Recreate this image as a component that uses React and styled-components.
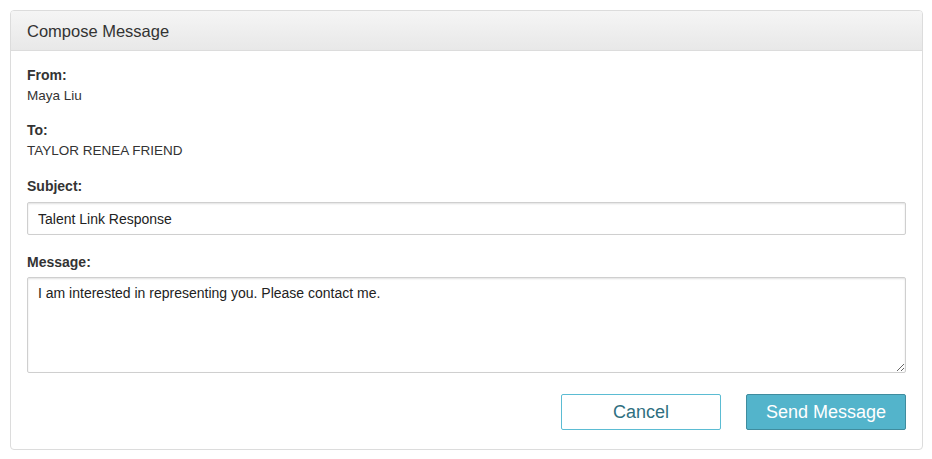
import React, { useState } from 'react';
import styled, { createGlobalStyle } from 'styled-components';

const Global = createGlobalStyle`
    body {
        margin: 0;
        background: #fff;
        font-family: "Liberation Sans", Arial, sans-serif;
        color: #333;
    }
`;

const Page = styled.div`
    padding: 10px 9px 10px 10px;
`;

const Panel = styled.div`
    border: 1px solid #dcdcdc;
    border-radius: 4px;
    background: #fff;
    overflow: hidden;
`;

const Header = styled.div`
    display: flex;
    align-items: center;
    padding: 1px 16px 0;
    box-sizing: border-box;
    height: 40px;
    background: linear-gradient(#f5f5f5, #e8e8e8);
    border-bottom: 1px solid #dcdcdc;
    font-size: 16.5px;
    color: #333;
`;

const Body = styled.div`
    padding: 15px 16px 19px;
`;

const Group = styled.div`
    margin-bottom: ${props => props.gap ?? 16}px;
`;

const Label = styled.div`
    font-size: 14px;
    font-weight: bold;
    line-height: 18px;
    color: #333;
    margin-bottom: ${props => props.gap || 3}px;
`;

const Value = styled.div`
    font-size: 13.5px;
    line-height: 18px;
    color: #333;
`;

const Input = styled.input`
    display: block;
    box-sizing: border-box;
    width: 100%;
    height: 33px;
    padding: 0 10px;
    border: 1px solid #cfcfcf;
    border-radius: 2px;
    box-shadow: inset 0 1px 2px rgba(0, 0, 0, 0.12);
    font-family: inherit;
    font-size: 14px;
    color: #222;
    outline: none;
`;

const TextArea = styled.textarea`
    display: block;
    box-sizing: border-box;
    width: 100%;
    height: 96px;
    padding: 6px 10px;
    border: 1px solid #cfcfcf;
    border-radius: 2px;
    box-shadow: inset 0 1px 2px rgba(0, 0, 0, 0.12);
    font-family: inherit;
    font-size: 14px;
    line-height: 18px;
    color: #222;
    outline: none;
    resize: vertical;
`;

const Actions = styled.div`
    display: flex;
    justify-content: flex-end;
    gap: 25px;
    margin-top: 21px;
`;

const Button = styled.button`
    width: 160px;
    height: 36px;
    border-radius: 2px;
    font-family: inherit;
    font-size: 18px;
    cursor: pointer;
    border: 1px solid ${props => props.primary ? '#3f8c9e' : '#5bbcd3'};
    background: ${props => props.primary ? '#53b4cb' : '#fff'};
    color: ${props => props.primary ? '#fff' : '#2f6f7f'};
`;

const App = () => {
    const [subject, setSubject] = useState('Talent Link Response');
    const [message, setMessage] = useState('I am interested in representing you. Please contact me.');

    return (
        <Page>
            <Global />
            <Panel>
                <Header>Compose Message</Header>
                <Body>
                    <Group>
                        <Label>From:</Label>
                        <Value>Maya Liu</Value>
                    </Group>
                    <Group gap={17}>
                        <Label>To:</Label>
                        <Value>TAYLOR RENEA FRIEND</Value>
                    </Group>
                    <Group gap={18}>
                        <Label gap={7}>Subject:</Label>
                        <Input value={subject} onChange={e => setSubject(e.target.value)} />
                    </Group>
                    <Group gap={0}>
                        <Label gap={6}>Message:</Label>
                        <TextArea value={message} onChange={e => setMessage(e.target.value)} />
                    </Group>
                    <Actions>
                        <Button>Cancel</Button>
                        <Button primary>Send Message</Button>
                    </Actions>
                </Body>
            </Panel>
        </Page>
    );
};

export default App;
